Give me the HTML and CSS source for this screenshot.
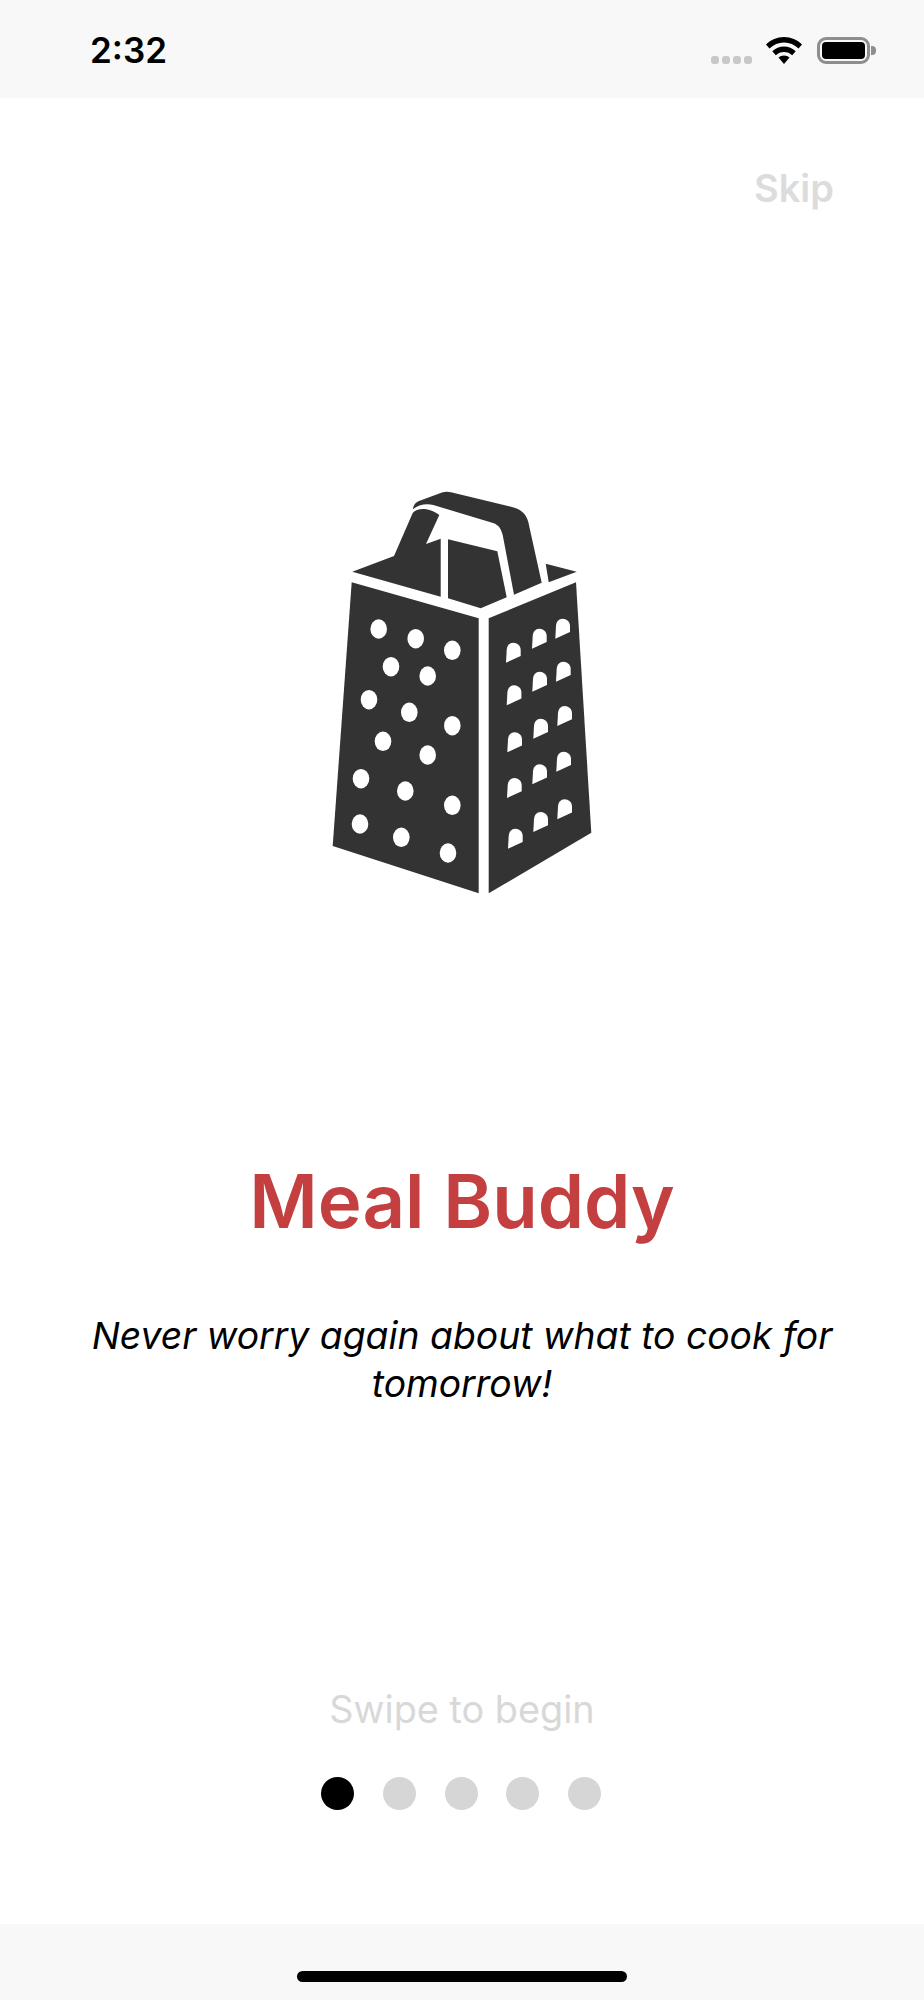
FILE: index.html
```html
<!DOCTYPE html>
<html lang="en">
<head>
    <meta charset="UTF-8">
    <meta name="viewport" content="width=device-width, initial-scale=1.0">
    <title>Meal Buddy</title>
    <link rel="stylesheet" href="styles.css">
</head>
<body>
    <div class="screen">
        <header class="status-bar">
            <span class="time">2:32</span>
            <div class="status-icons">
                <div class="signal"><i></i><i></i><i></i><i></i></div>
                <svg class="wifi" viewBox="0 0 36 27" width="36" height="27">
                    <path d="M18 0C11 0 5 2.800 0 7.500L3.500 11.500C7.500 7.800 12.500 5.500 18 5.500C23.500 5.500 28.500 7.800 32.500 11.500L36 7.500C31 2.800 25 0 18 0Z"/>
                    <path d="M18 9.500C13.500 9.500 9.500 11.200 6.300 14.300L9.800 18.200C12 16.100 14.800 14.900 18 14.900C21.200 14.900 24 16.100 26.200 18.200L29.700 14.300C26.500 11.200 22.500 9.500 18 9.500Z"/>
                    <path d="M18 18.500C15.800 18.500 14 19.200 12.500 20.500L18 27L23.500 20.500C22 19.200 20.200 18.500 18 18.500Z"/>
                </svg>
                <div class="battery"><div class="battery-fill"></div></div>
                <div class="battery-cap"></div>
            </div>
        </header>

        <main class="content">
            <a class="skip">Skip</a>

            <svg class="grater" viewBox="320 480 290 430" width="290" height="430">
                <defs>
                    <path id="hole" d="M0 0L.7-12.700C1-17 3.500-20 7.300-20C11.200-20 14.700-17 14.700-12.700L14.700-6.700Z"/>
                </defs>
                <g class="grater-body">
                    <path d="M351.700 582.300L478.700 618.300V893.300L332.700 846Z"/>
                    <path d="M488.700 618.300L576 582.300L591.300 832.700L488.700 893.300Z"/>
                    <path d="M352.300 571.700L394 556L412.700 513C415 510 420 508.500 425 509C430 509.500 435 511.500 439.300 515L426 544L440.700 538.700V596.700Z"/>
                    <path d="M448 539.300L497.300 551.300L506.700 597.300L480.700 608.300L448 598.300Z"/>
                    <path d="M412.700 509.300C413.500 505 415.500 502.500 419 501L442 492.500C445 491.500 448 491.500 451 492.300L512 507C520 509 526 513 528.300 522L541.700 582.700L514 594.700L502.700 535C501 529 499 525 493 523L433.300 505C426 503 418 505 412.700 509.300Z"/>
                    <path d="M545.700 563.700L576.700 571.700L548.700 582.300Z"/>
                </g>
                <g class="grater-dots">
                    <ellipse cx="378.700" cy="629" rx="8.300" ry="9.700"/>
                    <ellipse cx="415.700" cy="638.700" rx="8.300" ry="9.700"/>
                    <ellipse cx="452.300" cy="650.300" rx="8.300" ry="9.700"/>
                    <ellipse cx="391" cy="666.700" rx="8.300" ry="9.700"/>
                    <ellipse cx="427.700" cy="676" rx="8.300" ry="9.700"/>
                    <ellipse cx="369" cy="699.700" rx="8.300" ry="9.700"/>
                    <ellipse cx="409.300" cy="712.300" rx="8.300" ry="9.700"/>
                    <ellipse cx="452.300" cy="725.700" rx="8.300" ry="9.700"/>
                    <ellipse cx="383" cy="741.300" rx="8.300" ry="9.700"/>
                    <ellipse cx="427.700" cy="755" rx="8.300" ry="9.700"/>
                    <ellipse cx="361" cy="778.700" rx="8.300" ry="9.700"/>
                    <ellipse cx="405.300" cy="791" rx="8.300" ry="9.700"/>
                    <ellipse cx="452.300" cy="805.300" rx="8.300" ry="9.700"/>
                    <ellipse cx="360" cy="824" rx="8.300" ry="9.700"/>
                    <ellipse cx="401.300" cy="837.300" rx="8.300" ry="9.700"/>
                    <ellipse cx="448" cy="853" rx="8.300" ry="9.700"/>
                    <use href="#hole" x="506" y="662.700"/>
                    <use href="#hole" x="532" y="648.700"/>
                    <use href="#hole" x="555.300" y="638.700"/>
                    <use href="#hole" x="506.700" y="705.300"/>
                    <use href="#hole" x="532.300" y="691.700"/>
                    <use href="#hole" x="556" y="681.700"/>
                    <use href="#hole" x="507.300" y="752.300"/>
                    <use href="#hole" x="533.300" y="738.700"/>
                    <use href="#hole" x="557.300" y="726"/>
                    <use href="#hole" x="507" y="798"/>
                    <use href="#hole" x="532.300" y="784.300"/>
                    <use href="#hole" x="556.300" y="771.700"/>
                    <use href="#hole" x="508" y="848.700"/>
                    <use href="#hole" x="533.300" y="832"/>
                    <use href="#hole" x="557.300" y="819.300"/>
                </g>
            </svg>

            <h1 class="title">Meal Buddy</h1>
            <p class="tagline">Never worry again about what to cook for tomorrow!</p>

            <p class="swipe">Swipe to begin</p>
            <div class="pager">
                <span class="dot active"></span>
                <span class="dot"></span>
                <span class="dot"></span>
                <span class="dot"></span>
                <span class="dot"></span>
            </div>
        </main>

        <footer class="home-bar">
            <div class="home-indicator"></div>
        </footer>
    </div>
</body>
</html>
```

FILE: styles.css
```css
* {
    box-sizing: border-box;
}
body {
    margin: 0;
    background-color: #ffffff;
    font-family: Inter, "Liberation Sans", sans-serif;
}
.screen {
    display: flex;
    flex-direction: column;
    width: 924px;
    height: 2000px;
}
.status-bar {
    display: flex;
    justify-content: space-between;
    align-items: flex-start;
    flex: 0 0 98px;
    padding: 30px 48px 0 90px;
    background-color: #f8f8f8;
}
.time {
    font-size: 35px;
    font-weight: 600;
    line-height: 40px;
    color: #000000;
}
.status-icons {
    display: flex;
    align-items: flex-end;
    padding-top: 7px;
}
.signal {
    display: flex;
    gap: 3px;
    margin-right: 14px;
}
.signal i {
    width: 8px;
    height: 8px;
    border-radius: 3px;
    background-color: #c8c8c8;
}
.wifi {
    display: block;
    margin-right: 15px;
    fill: #000000;
}
.battery {
    width: 53px;
    height: 27px;
    padding: 2px;
    border: 3px solid #8e8e8e;
    border-radius: 9px;
}
.battery-fill {
    height: 100%;
    border-radius: 4px;
    background-color: #000000;
}
.battery-cap {
    align-self: center;
    width: 5px;
    height: 9px;
    margin-left: 1px;
    border-radius: 0 4px 4px 0;
    background-color: #8e8e8e;
}
.content {
    display: flex;
    flex-direction: column;
    align-items: center;
    flex: 1;
}
.skip {
    align-self: flex-end;
    margin: 67px 90px 0 0;
    font-size: 38px;
    font-weight: 600;
    line-height: 46px;
    color: #dcdcdc;
}
.grater {
    display: block;
    margin: 269px 0 0 6px;
}
.grater-body {
    fill: #333333;
}
.grater-dots {
    fill: #ffffff;
}
.title {
    margin: 246px 0 0;
    font-size: 74.300px;
    font-weight: 600;
    line-height: 90px;
    color: #c44040;
}
.tagline {
    width: 780px;
    margin: 66px 0 0;
    font-size: 37.300px;
    font-style: italic;
    line-height: 48px;
    text-align: center;
    color: #000000;
}
.swipe {
    margin: 279px 0 0;
    font-size: 37.800px;
    line-height: 44px;
    color: #d8d8d8;
}
.pager {
    display: flex;
    gap: 28.700px;
    margin: 46px 2px 0 0;
}
.dot {
    width: 33px;
    height: 33px;
    border-radius: 50%;
    background-color: #d6d6d6;
}
.dot.active {
    background-color: #000000;
}
.home-bar {
    display: flex;
    justify-content: center;
    flex: 0 0 76px;
    padding-top: 47px;
    background-color: #f8f8f8;
}
.home-indicator {
    width: 330px;
    height: 11px;
    border-radius: 6px;
    background-color: #000000;
}
```
